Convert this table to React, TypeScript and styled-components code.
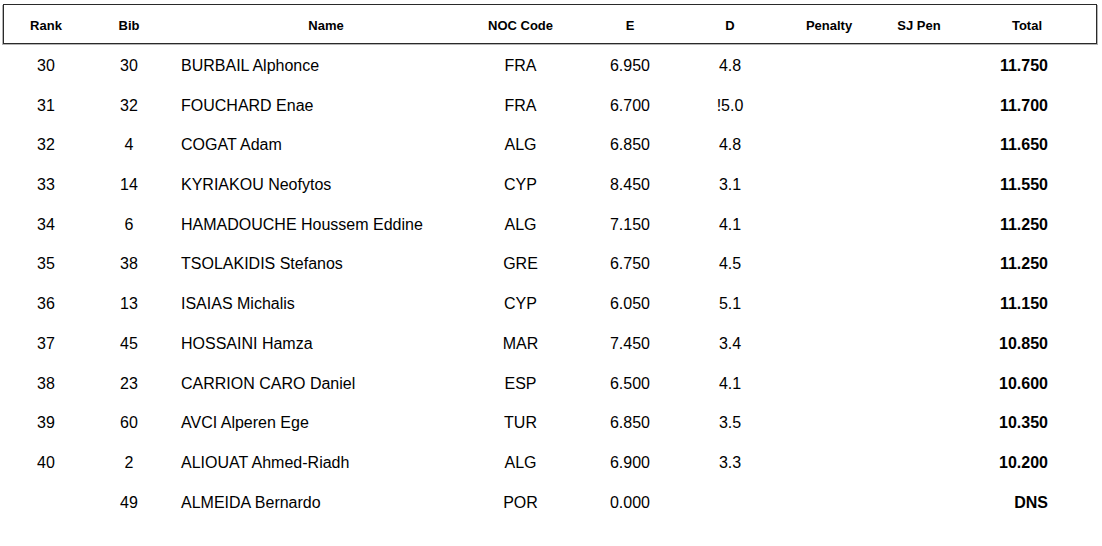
import React, { FC } from 'react';
import styled, { createGlobalStyle } from 'styled-components';

interface Result {
  rank: string;
  bib: string;
  name: string;
  noc: string;
  e: string;
  d: string;
  total: string;
}

const results: Result[] = [
  { rank: '30', bib: '30', name: 'BURBAIL Alphonce', noc: 'FRA', e: '6.950', d: '4.8', total: '11.750' },
  { rank: '31', bib: '32', name: 'FOUCHARD Enae', noc: 'FRA', e: '6.700', d: '!5.0', total: '11.700' },
  { rank: '32', bib: '4', name: 'COGAT Adam', noc: 'ALG', e: '6.850', d: '4.8', total: '11.650' },
  { rank: '33', bib: '14', name: 'KYRIAKOU Neofytos', noc: 'CYP', e: '8.450', d: '3.1', total: '11.550' },
  { rank: '34', bib: '6', name: 'HAMADOUCHE Houssem Eddine', noc: 'ALG', e: '7.150', d: '4.1', total: '11.250' },
  { rank: '35', bib: '38', name: 'TSOLAKIDIS Stefanos', noc: 'GRE', e: '6.750', d: '4.5', total: '11.250' },
  { rank: '36', bib: '13', name: 'ISAIAS Michalis', noc: 'CYP', e: '6.050', d: '5.1', total: '11.150' },
  { rank: '37', bib: '45', name: 'HOSSAINI Hamza', noc: 'MAR', e: '7.450', d: '3.4', total: '10.850' },
  { rank: '38', bib: '23', name: 'CARRION CARO Daniel', noc: 'ESP', e: '6.500', d: '4.1', total: '10.600' },
  { rank: '39', bib: '60', name: 'AVCI Alperen Ege', noc: 'TUR', e: '6.850', d: '3.5', total: '10.350' },
  { rank: '40', bib: '2', name: 'ALIOUAT Ahmed-Riadh', noc: 'ALG', e: '6.900', d: '3.3', total: '10.200' },
  { rank: '', bib: '49', name: 'ALMEIDA Bernardo', noc: 'POR', e: '0.000', d: '', total: 'DNS' },
];

const GlobalStyle = createGlobalStyle`
  html, body {
    margin: 0;
    padding: 0;
    background: #fff;
  }
  body {
    font-family: "Liberation Sans", Arial, sans-serif;
    color: #000;
  }
`;

const Page = styled.div`
  width: 1102px;
  height: 546px;
  box-sizing: border-box;
  padding: 4px 5px 0 3px;
`;

const Row = styled.div`
  display: grid;
  grid-template-columns: 84px 82px 312px 77px 142px 58px 140px 40px 158px;
  box-sizing: border-box;
  width: 1094px;
`;

const HeaderRow = styled(Row)`
  height: 40px;
  border: 1px solid #2a2a2a;
  box-shadow: -1px 1px 0 #b4b4b4, 1px 1px 0 #b4b4b4;
  padding-top: 2px;
  font-size: 13px;
  font-weight: bold;
`;

const Body = styled.div`
  margin-top: 2px;
`;

const BodyRow = styled(Row)`
  height: 39.73px;
  border-left: 1px solid transparent;
  border-right: 1px solid transparent;
  font-size: 16px;
`;

const Cell = styled.div<{ $align?: 'left' | 'center' | 'right'; $bold?: boolean }>`
  display: flex;
  align-items: center;
  justify-content: ${({ $align }) =>
    $align === 'left' ? 'flex-start' : $align === 'right' ? 'flex-end' : 'center'};
  white-space: nowrap;
  font-weight: ${({ $bold }) => ($bold ? 'bold' : 'inherit')};
`;

const NameCell = styled(Cell)`
  padding-left: 11px;
`;

const TotalHead = styled(Cell)`
  padding-left: 18px;
`;

const TotalCell = styled(Cell)`
  padding-right: 49px;
`;

const App: FC = () => {
  return (
    <Page>
      <GlobalStyle />
      <HeaderRow>
        <Cell>Rank</Cell>
        <Cell>Bib</Cell>
        <Cell>Name</Cell>
        <Cell>NOC Code</Cell>
        <Cell>E</Cell>
        <Cell>D</Cell>
        <Cell>Penalty</Cell>
        <Cell>SJ Pen</Cell>
        <TotalHead>Total</TotalHead>
      </HeaderRow>
      <Body>
        {results.map((r) => (
          <BodyRow key={r.bib}>
            <Cell>{r.rank}</Cell>
            <Cell>{r.bib}</Cell>
            <NameCell $align="left">{r.name}</NameCell>
            <Cell>{r.noc}</Cell>
            <Cell>{r.e}</Cell>
            <Cell>{r.d}</Cell>
            <Cell />
            <Cell />
            <TotalCell $align="right" $bold>
              {r.total}
            </TotalCell>
          </BodyRow>
        ))}
      </Body>
    </Page>
  );
};

export default App;
